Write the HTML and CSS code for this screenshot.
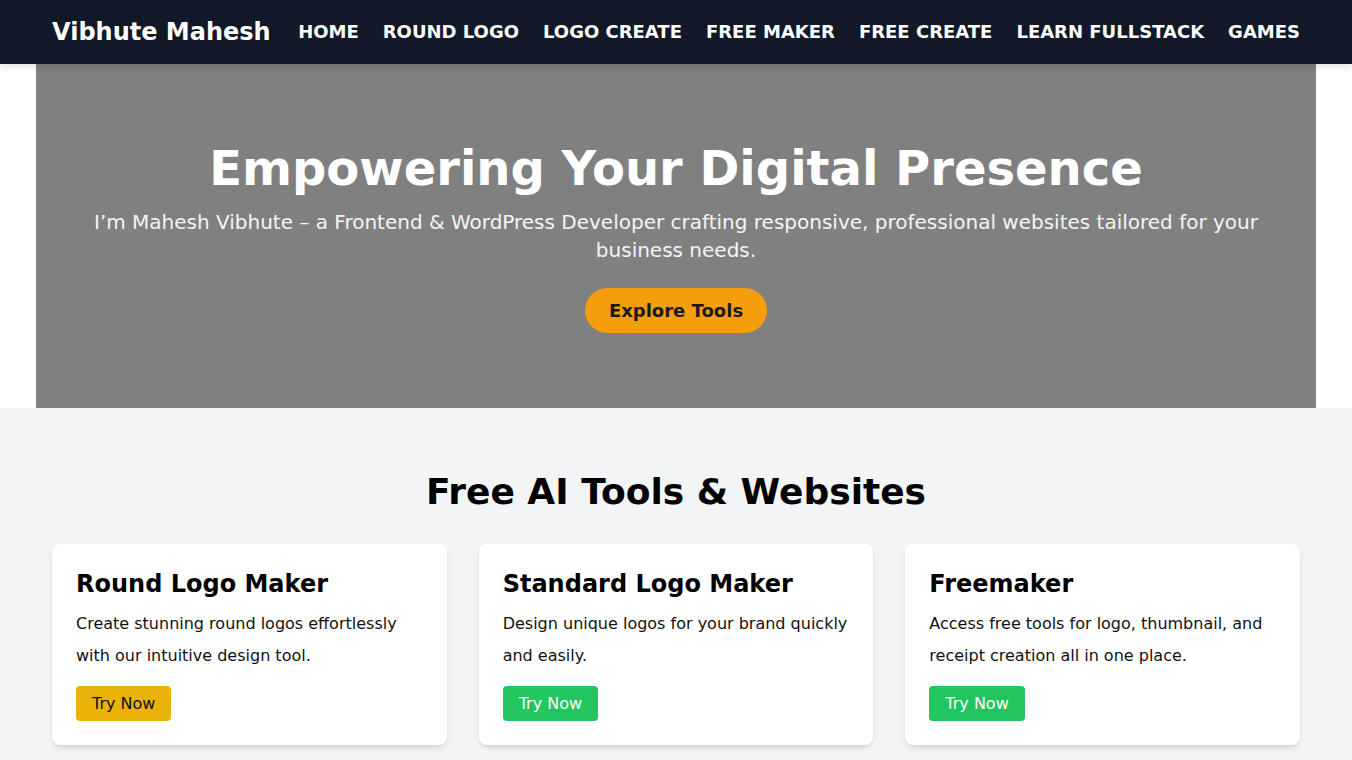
FILE: index.html
```html
<!DOCTYPE html>
<html lang="en">
<head>
<meta charset="utf-8">
<title>Vibhute Mahesh</title>
<link rel="stylesheet" href="styles.css">
</head>
<body>
<header class="nav">
  <div class="nav-inner">
    <a class="brand" href="#">Vibhute Mahesh</a>
    <nav class="links">
      <a href="#">HOME</a>
      <a href="#">ROUND LOGO</a>
      <a href="#">LOGO CREATE</a>
      <a href="#">FREE MAKER</a>
      <a href="#">FREE CREATE</a>
      <a href="#">LEARN FULLSTACK</a>
      <a href="#">GAMES</a>
    </nav>
  </div>
</header>
<section class="hero">
  <h1>Empowering Your Digital Presence</h1>
  <p>I’m Mahesh Vibhute – a Frontend &amp; WordPress Developer crafting responsive, professional websites tailored for your business needs.</p>
  <a class="cta" href="#">Explore Tools</a>
</section>
<section class="tools">
  <h2>Free AI Tools &amp; Websites</h2>
  <div class="grid">
    <div class="card">
      <h3>Round Logo Maker</h3>
      <p>Create stunning round logos effortlessly with our intuitive design tool.</p>
      <a class="btn btn-yellow" href="#">Try Now</a>
    </div>
    <div class="card">
      <h3>Standard Logo Maker</h3>
      <p>Design unique logos for your brand quickly and easily.</p>
      <a class="btn btn-green" href="#">Try Now</a>
    </div>
    <div class="card">
      <h3>Freemaker</h3>
      <p>Access free tools for logo, thumbnail, and receipt creation all in one place.</p>
      <a class="btn btn-green" href="#">Try Now</a>
    </div>
  </div>
</section>
</body>
</html>
```
FILE: styles.css
```css
* { box-sizing: border-box; margin: 0; padding: 0; }
body {
  font-family: "DejaVu Sans", sans-serif;
  background: #ffffff;
  color: #000;
}
a { text-decoration: none; color: inherit; }

.nav {
  background: #111827;
  height: 64px;
  box-shadow: 0 4px 6px rgba(0,0,0,0.1);
  position: relative;
  z-index: 2;
}
.nav-inner {
  max-width: 1280px;
  margin: 0 auto;
  padding: 0 16px;
  height: 64px;
  display: flex;
  align-items: center;
  justify-content: space-between;
}
.brand {
  color: #fff;
  font-weight: bold;
  font-size: 24px;
  line-height: 32px;
}
.links {
  display: flex;
  gap: 24px;
}
.links a {
  color: #fff;
  font-weight: bold;
  font-size: 18px;
  line-height: 28px;
}

.hero {
  max-width: 1280px;
  margin: 0 auto;
  background: #808080;
  color: #fff;
  text-align: center;
  padding: 80px 40px 0;
  height: 344px;
}
.hero h1 {
  font-size: 48px;
  line-height: 48px;
  font-weight: bold;
}
.hero p {
  margin-top: 16px;
  font-size: 20px;
  line-height: 28px;
  color: #f3f4f6;
}
.cta {
  display: inline-block;
  margin-top: 24px;
  background: #f59e0b;
  color: #1a1a1a;
  font-weight: bold;
  font-size: 18px;
  line-height: normal;
  padding: 12px 24px;
  border-radius: 9999px;
}

.tools {
  background: #f3f4f6;
  padding: 64px 0 40px;
}
.tools h2 {
  text-align: center;
  font-size: 36px;
  line-height: 40px;
  font-weight: bold;
  margin-bottom: 32px;
}
.grid {
  max-width: 1280px;
  margin: 0 auto;
  padding: 0 16px;
  display: grid;
  grid-template-columns: repeat(3, 1fr);
  gap: 32px;
}
.card {
  background: #fff;
  border-radius: 8px;
  padding: 24px;
  box-shadow: 0 4px 6px -1px rgba(0,0,0,0.1), 0 2px 4px -2px rgba(0,0,0,0.1);
}
.card h3 {
  font-size: 24px;
  line-height: 32px;
  font-weight: bold;
  margin-bottom: 8px;
}
.card p {
  font-size: 16px;
  line-height: 32px;
  color: #111;
}
.btn {
  display: inline-block;
  margin-top: 14px;
  font-size: 16px;
  line-height: normal;
  padding: 8px 16px;
  border-radius: 4px;
}
.btn-yellow { background: #eab308; color: #111; }
.btn-green { background: #22c55e; color: #fff; }
```
